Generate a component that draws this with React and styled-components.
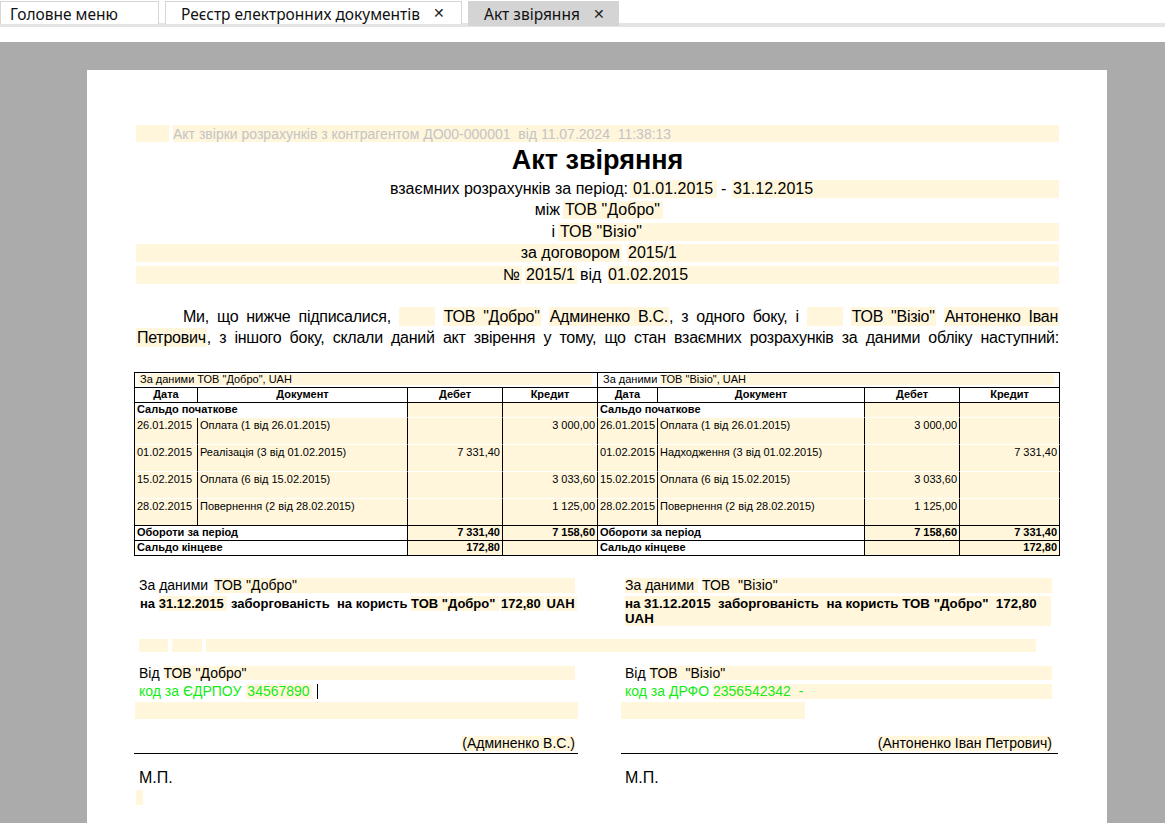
import React from 'react';
import styled, { createGlobalStyle } from 'styled-components';

const CREAM = '#fff6dc';
const GREEN = '#14ec14';

const Global = createGlobalStyle`
  html, body { margin: 0; padding: 0; background: #fff; }
  body { font-family: "Liberation Sans", Arial, sans-serif; color: #000; overflow: hidden; }
  * { box-sizing: border-box; }
`;

const Shell = styled.div`
  width: 1165px;
  height: 823px;
  display: flex;
  flex-direction: column;
  overflow: hidden;
`;

/* ---------- tabs ---------- */
const TabBar = styled.div`
  height: 27px;
  padding-top: 1px;
  display: flex;
  align-items: flex-start;
  gap: 6px;
  box-shadow: inset 0 -4px 0 #e4e4e4;
  font-family: "Noto Sans", "Open Sans", sans-serif;
  font-size: 15.5px;
`;

const Tab = styled.div`
  width: ${p => p.$w}px;
  height: ${p => (p.$active ? 25 : 23)}px;
  padding-left: ${p => p.$pl}px;
  padding-top: 3px;
  display: flex;
  align-items: center;
  gap: 13px;
  background: ${p => (p.$active ? '#d4d4d4' : '#fff')};
  border: ${p => (p.$active ? 'none' : '1px solid #d6d6d6')};
  border-bottom: none;
  color: #111;
  white-space: nowrap;
  line-height: 1;
`;

const Close = styled.span`
  font-size: 14px;
  color: #222;
  font-family: "Liberation Sans", sans-serif;
  margin-top: -3px;
`;

const Spacer = styled.div`
  height: 15px;
  background: #fff;
`;

const Viewport = styled.div`
  flex: 1;
  background: #ababab;
  padding: 28px 0 0 87px;
  display: flex;
  overflow: hidden;
`;

const Page = styled.div`
  width: 1020px;
  background: #fff;
  padding: 55px 48px 0 49px;
  display: flex;
  flex-direction: column;
`;

/* ---------- header rows ---------- */
const Row = styled.div`
  height: ${p => p.$h}px;
  display: flex;
  align-items: center;
  gap: ${p => p.$gap || 0}px;
  font-size: ${p => p.$fs || 16}px;
`;

const Cell = styled.div`
  height: ${p => p.$ch || 18}px;
  ${p => (p.$w ? `width: ${p.$w}px; flex: none;` : 'flex: 1;')}
  display: flex;
  align-items: center;
  justify-content: ${p => p.$align || 'flex-start'};
  padding: 0 ${p => p.$pr || 0}px 0 ${p => p.$pl || 0}px;
  margin-left: ${p => p.$ml || 0}px;
  background: ${p => (p.$hl ? CREAM : 'transparent')};
  color: ${p => p.$color || '#000'};
  white-space: nowrap;
  overflow: hidden;
`;

const Title = styled.div`
  height: 36px;
  display: flex;
  align-items: center;
  justify-content: center;
  font-size: 27px;
  font-weight: 700;
`;

/* ---------- paragraph ---------- */
const Para = styled.div`
  margin-top: 20px;
  font-size: 16px;
  letter-spacing: -0.25px;
  line-height: 21px;
`;

const ParaLine = styled.div`
  text-align: justify;
  text-align-last: justify;
  white-space: nowrap;
  padding-left: ${p => p.$indent || 0}px;
`;

const Hl = styled.span`
  background: ${CREAM};
  padding: 1px 1px;
`;

const Blank = styled.span`
  display: inline-block;
  width: 36px;
  height: 19px;
  background: ${CREAM};
  vertical-align: -4px;
`;

/* ---------- table ---------- */
const Table = styled.table`
  margin-top: 24px;
  margin-left: -2px;
  width: 926px;
  table-layout: fixed;
  border-collapse: separate;
  border-spacing: 0;
  border-top: 1px solid #000;
  border-left: 1px solid #000;
  font-size: 11px;
`;

const Col = styled.col`
  width: ${p => p.$w}px;
`;

const Td = styled.td`
  height: ${p => p.$h || 15}px;
  padding: ${p => (p.$top ? '1px 2px 0 2px' : '0 2px')};
  border-right: 1px solid #000;
  border-bottom: 1px solid ${p => (p.$sep ? '#fff' : '#000')};
  background: ${p => (p.$hl ? CREAM : '#fff')};
  text-align: ${p => p.$align || 'left'};
  vertical-align: ${p => (p.$top ? 'top' : 'middle')};
  font-weight: ${p => (p.$bold ? 700 : 400)};
  white-space: nowrap;
  overflow: hidden;
  line-height: 13px;
`;

const Banner = styled.div`
  height: 11px;
  display: flex;
  align-items: center;
  margin: 0 3px 0 1px;
  line-height: 11px;
`;

const BannerPart = styled.span`
  ${p => (p.$grow ? 'flex: 1;' : '')}
  background: ${p => (p.$hl ? CREAM : 'transparent')};
  height: 11px;
  padding-left: ${p => p.$pl || 0}px;
  padding-right: ${p => p.$pr || 0}px;
`;

/* ---------- bottom ---------- */
const Sides = styled.div`
  display: grid;
  grid-template-columns: 442px 437px;
  column-gap: 43px;
  margin-top: ${p => p.$mt || 0}px;
`;

const Side = styled.div`
  display: flex;
  flex-direction: column;
`;

const Line = styled.div`
  height: ${p => p.$h || 15}px;
  line-height: ${p => p.$h || 15}px;
  display: flex;
  font-size: ${p => p.$fs || 14}px;
  font-weight: ${p => (p.$bold ? 700 : 400)};
  color: ${p => p.$color || '#000'};
  padding-left: ${p => p.$pl || 0}px;
  padding-right: ${p => p.$pr || 0}px;
  margin-top: ${p => p.$mt || 0}px;
  white-space: pre;
`;

const Seg = styled.span`
  display: block;
  ${p => (p.$grow ? 'flex: 1;' : '')}
  ${p => (p.$w ? `width: ${p.$w}px; flex: none;` : '')}
  background: ${p => (p.$hl ? CREAM : 'transparent')};
  margin-left: ${p => p.$ml || 0}px;
  padding-left: ${p => p.$pl || 0}px;
  white-space: pre;
`;

const Block = styled.div`
  background: ${CREAM};
  width: ${p => p.$w}px;
  height: ${p => p.$h}px;
  margin-left: ${p => p.$ml || 0}px;
  margin-top: ${p => p.$mt || 0}px;
`;

const Wrapped = styled.div`
  margin-left: 4px;
  margin-top: 3px;
  width: 426px;
  font-size: 13.3px;
  font-weight: 700;
  line-height: 15px;
  background: ${CREAM};
  white-space: pre;
`;

const BlankStrip = styled.div`
  margin-top: ${p => p.$mt}px;
  height: 13px;
  display: flex;
  gap: 4px;
  padding-left: 3px;
  width: 900px;
`;

const SignLine = styled.div`
  height: 18px;
  margin-top: 17px;
  display: flex;
  justify-content: flex-end;
  align-items: center;
  font-size: 14px;
  border-bottom: 1px solid #000;
  margin-left: ${p => p.$ml || 0}px;
  padding-right: ${p => p.$pr || 0}px;
  padding-bottom: 1px;
`;

const SignName = styled.span`
  background: ${CREAM};
  line-height: 15px;
`;

const Caret = styled.span`
  display: block;
  width: 1px;
  height: 15px;
  background: #000;
  margin-left: 5px;
`;

const leftRows = [
  ['26.01.2015', 'Оплата (1 від 26.01.2015)', '', '3 000,00'],
  ['01.02.2015', 'Реалізація (3 від 01.02.2015)', '7 331,40', ''],
  ['15.02.2015', 'Оплата (6 від 15.02.2015)', '', '3 033,60'],
  ['28.02.2015', 'Повернення (2 від 28.02.2015)', '', '1 125,00'],
];
const rightRows = [
  ['26.01.2015', 'Оплата (1 від 26.01.2015)', '3 000,00', ''],
  ['01.02.2015', 'Надходження (3 від 01.02.2015)', '', '7 331,40'],
  ['15.02.2015', 'Оплата (6 від 15.02.2015)', '3 033,60', ''],
  ['28.02.2015', 'Повернення (2 від 28.02.2015)', '1 125,00', ''],
];

function HalfCells({ row, last }) {
  const [d, doc, deb, cred] = row;
  return (
    <>
      <Td $h={27} $hl $top $sep={!last}>{d}</Td>
      <Td $h={27} $hl $top $sep={!last}>{doc}</Td>
      <Td $h={27} $hl $top $sep={!last} $align="right">{deb}</Td>
      <Td $h={27} $hl $top $sep={!last} $align="right">{cred}</Td>
    </>
  );
}

function ReconTable() {
  return (
    <Table>
      <colgroup>
        <Col $w={63} />
        <Col $w={210} />
        <Col $w={95} />
        <Col $w={95} />
        <Col $w={60} />
        <Col $w={207} />
        <Col $w={95} />
        <Col $w={100} />
      </colgroup>
      <tbody>
        <tr>
          <Td colSpan={4}>
            <Banner>
              <BannerPart $hl $grow $pl={2}>За даними ТОВ "Добро", UAH</BannerPart>
            </Banner>
          </Td>
          <Td colSpan={4}>
            <Banner>
              <BannerPart $pl={2} $pr={3}>За даними</BannerPart>
              <BannerPart $hl $grow>ТОВ "Візіо", UAH</BannerPart>
            </Banner>
          </Td>
        </tr>
        <tr>
          <Td $bold $align="center">Дата</Td>
          <Td $bold $align="center">Документ</Td>
          <Td $bold $align="center">Дебет</Td>
          <Td $bold $align="center">Кредит</Td>
          <Td $bold $align="center">Дата</Td>
          <Td $bold $align="center">Документ</Td>
          <Td $bold $align="center">Дебет</Td>
          <Td $bold $align="center">Кредит</Td>
        </tr>
        <tr>
          <Td colSpan={2} $bold $sep>Сальдо початкове</Td>
          <Td $hl $sep />
          <Td $hl $sep />
          <Td colSpan={2} $bold $sep>Сальдо початкове</Td>
          <Td $hl $sep />
          <Td $hl $sep />
        </tr>
        {leftRows.map((r, i) => (
          <tr key={r[0]}>
            <HalfCells row={r} last={i === leftRows.length - 1} />
            <HalfCells row={rightRows[i]} last={i === leftRows.length - 1} />
          </tr>
        ))}
        <tr>
          <Td colSpan={2} $bold>Обороти за період</Td>
          <Td $hl $bold $align="right">7 331,40</Td>
          <Td $hl $bold $align="right">7 158,60</Td>
          <Td colSpan={2} $bold>Обороти за період</Td>
          <Td $hl $bold $align="right">7 158,60</Td>
          <Td $hl $bold $align="right">7 331,40</Td>
        </tr>
        <tr>
          <Td colSpan={2} $bold>Сальдо кінцеве</Td>
          <Td $hl $bold $align="right">172,80</Td>
          <Td $hl />
          <Td colSpan={2} $bold>Сальдо кінцеве</Td>
          <Td $hl />
          <Td $hl $bold $align="right">172,80</Td>
        </tr>
      </tbody>
    </Table>
  );
}

export default function App() {
  return (
    <Shell>
      <Global />
      <TabBar>
        <Tab $w={159} $pl={9}>Головне меню</Tab>
        <Tab $w={297} $pl={15}>
          Реєстр електронних документів <Close>✕</Close>
        </Tab>
        <Tab $w={151} $pl={16} $active>
          Акт звіряння <Close>✕</Close>
        </Tab>
      </TabBar>
      <Spacer />
      <Viewport>
        <Page>
          <Row $h={17} $gap={4} $fs={14}>
            <Cell $w={33} $hl $ch={17} />
            <Cell $hl $ch={17} $color="#c4c4c4">
              Акт звірки розрахунків з контрагентом ДО00-000001&nbsp; від 11.07.2024&nbsp; 11:38:13
            </Cell>
          </Row>
          <Title>Акт звіряння</Title>
          <Row $h={21.5}>
            <Cell $w={494} $align="flex-end" $pr={2}>взаємних розрахунків за період:</Cell>
            <Cell $w={87} $hl $pl={3}>01.01.2015</Cell>
            <Cell $w={15} $pl={4}>-</Cell>
            <Cell $hl $pl={1}>31.12.2015</Cell>
          </Row>
          <Row $h={21.5}>
            <Cell $w={427} $align="flex-end" $pr={3}>між</Cell>
            <Cell $w={100} $hl $pl={2}>ТОВ "Добро"</Cell>
            <Cell />
          </Row>
          <Row $h={21.5}>
            <Cell $w={422} $align="flex-end" $pr={3}>і</Cell>
            <Cell $hl $pl={2}>ТОВ "Візіо"</Cell>
          </Row>
          <Row $h={21.5} $gap={5}>
            <Cell $w={486} $hl $align="flex-end" $pr={2}>за договором</Cell>
            <Cell $hl $pl={1}>2015/1</Cell>
          </Row>
          <Row $h={21.5}>
            <Cell $w={386} $hl $align="flex-end" $pr={2}>№</Cell>
            <Cell $w={52} $hl $ml={3} $pl={1}>2015/1</Cell>
            <Cell $w={31} $pl={3}>від</Cell>
            <Cell $hl>01.02.2015</Cell>
          </Row>

          <Para>
            <ParaLine $indent={47}>
              Ми, що нижче підписалися, <Blank /> <Hl>ТОВ "Добро"</Hl> <Hl>Админенко В.С.</Hl>, з одного боку, і{' '}
              <Blank /> <Hl>ТОВ "Візіо"</Hl> <Hl>Антоненко Іван</Hl>
            </ParaLine>
            <ParaLine>
              <Hl>Петрович</Hl>, з іншого боку, склали даний акт звірення у тому, що стан взаємних розрахунків за даними обліку наступний:
            </ParaLine>
          </Para>

          <ReconTable />

          <Sides $mt={22}>
            <Side>
              <Line $pl={3} $pr={3}>
                <Seg>За даними </Seg>
                <Seg $hl $grow $ml={2}>ТОВ "Добро"</Seg>
              </Line>
              <Line $bold $fs={13} $pl={4} $mt={3}>
                <Seg>на </Seg>
                <Seg $hl>31.12.2015 </Seg>
                <Seg> заборгованість  на користь </Seg>
                <Seg $hl>ТОВ "Добро" </Seg>
                <Seg $hl $ml={2}>172,80 </Seg>
                <Seg $hl $ml={2} $w={31}>UAH</Seg>
              </Line>
            </Side>
            <Side>
              <Line $pl={4} $pr={6}>
                <Seg $hl>За даними </Seg>
                <Seg $hl $grow $ml={4}>ТОВ  "Візіо"</Seg>
              </Line>
              <Wrapped>
                {'на 31.12.2015  заборгованість  на користь ТОВ "Добро"  172,80\nUAH'}
              </Wrapped>
            </Side>
          </Sides>

          <BlankStrip $mt={13}>
            <Block $w={29} $h={13} />
            <Block $w={30} $h={13} />
            <Block $w={830} $h={13} />
          </BlankStrip>

          <Sides $mt={14}>
            <Side>
              <Line $h={14} $pl={3} $pr={3}>
                <Seg>Від </Seg>
                <Seg $hl $grow>ТОВ "Добро"</Seg>
              </Line>
              <Line $pl={3} $mt={4} $color={GREEN}>
                <Seg>код за ЄДРПОУ</Seg>
                <Seg $hl $ml={5} $pl={1} $w={66}>34567890</Seg>
                <Caret />
              </Line>
              <Block $w={443} $h={17} $ml={-1} $mt={3} />
              <SignLine $ml={-2} $pr={3}>
                <SignName>(Админенко В.С.)</SignName>
              </SignLine>
              <Line $h={16} $fs={16} $pl={3} $mt={16}>М.П.</Line>
              <Block $w={7} $h={15} $mt={4} />
            </Side>
            <Side>
              <Line $h={14} $pl={4} $pr={6}>
                <Seg>Від </Seg>
                <Seg $hl $grow>ТОВ  "Візіо"</Seg>
              </Line>
              <Line $pl={4} $pr={6} $mt={4} $color={GREEN}>
                <Seg>код за ДРФО </Seg>
                <Seg $hl $grow>2356542342  -</Seg>
              </Line>
              <Block $w={184} $h={17} $mt={3} />
              <SignLine $pr={6}>
                <SignName>(Антоненко Іван Петрович)</SignName>
              </SignLine>
              <Line $h={16} $fs={16} $pl={4} $mt={16}>М.П.</Line>
            </Side>
          </Sides>
        </Page>
      </Viewport>
    </Shell>
  );
}
